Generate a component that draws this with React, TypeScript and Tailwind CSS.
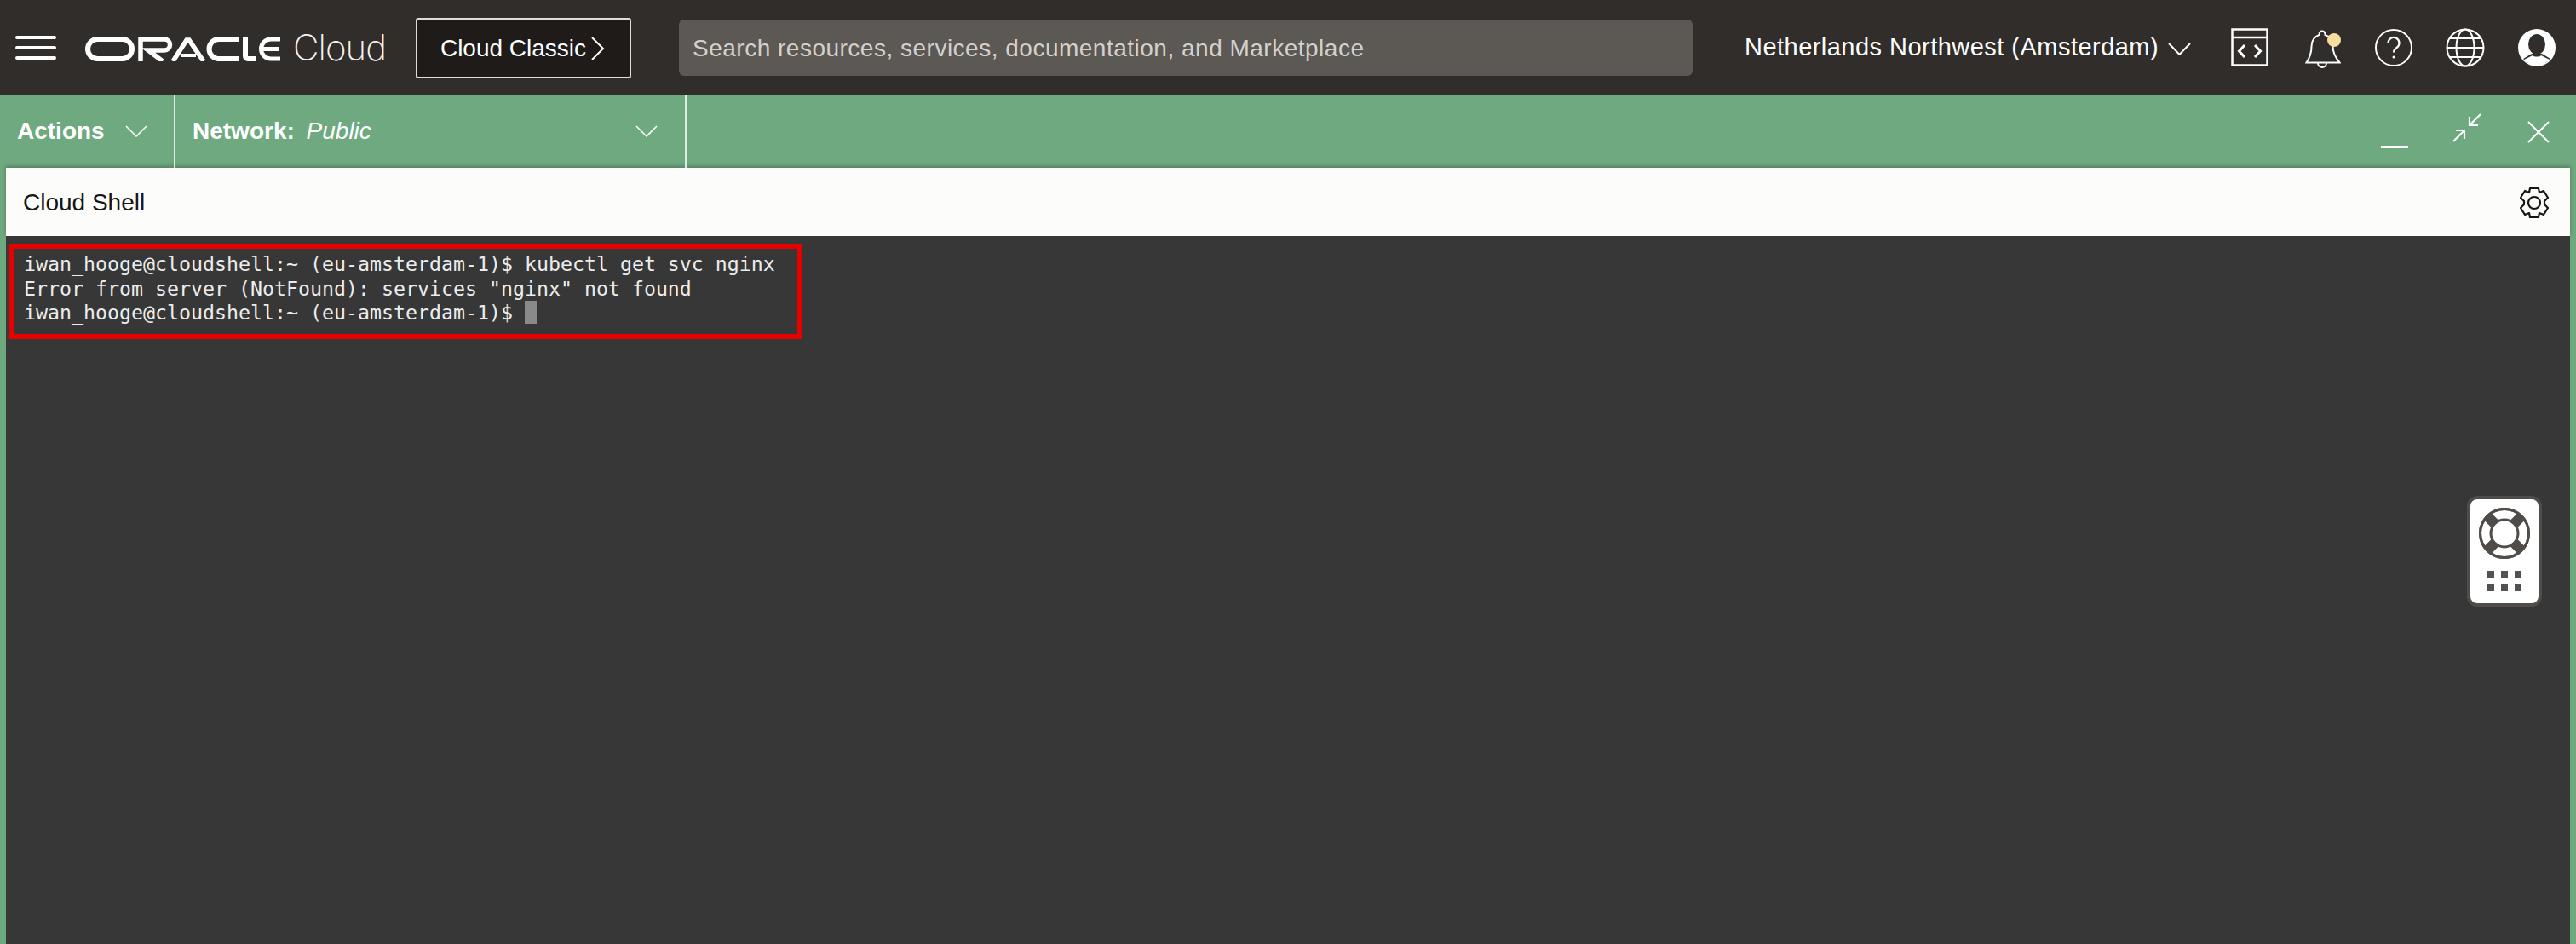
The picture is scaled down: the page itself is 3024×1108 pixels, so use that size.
const sans = "font-['Liberation_Sans',Arial,sans-serif]"

function OracleLogo() {
  return (
    <svg width="229" height="29" viewBox="0 0 229 29" fill="none" stroke="white" strokeWidth="6">
      <rect x="3" y="3" width="52" height="23" rx="11.500" />
      <path d="M65 29V3h28a6.500 6.500 0 0 1 0 13H74l17 13" strokeWidth="5.500" />
      <path d="M103 29 119 4h3l17 25" strokeWidth="5.500" />
      <path d="M113 22h17" strokeWidth="4" />
      <path d="M181 3h-24a11.500 11.500 0 0 0 0 23h24" />
      <path d="M188 0v23a3 3 0 0 0 3 3h10" />
      <path d="M229 3h-11a11.500 11.500 0 0 0 0 23h11M207 14.500h20" strokeWidth="5" />
    </svg>
  )
}

function Chevron({ w = 27, h = 15, stroke = 2 }: { w?: number; h?: number; stroke?: number }) {
  return (
    <svg width={w} height={h} viewBox={`0 0 ${w} ${h}`} fill="none" stroke="white" strokeWidth={stroke}>
      <path d={`M1 1l${(w - 2) / 2} ${h - 2}L${w - 1} 1`} />
    </svg>
  )
}

function ClassicChevron() {
  return (
    <svg width="16" height="28" viewBox="0 0 16 28" fill="none" stroke="white" strokeWidth="2">
      <path d="M1 1l13 13L1 27" />
    </svg>
  )
}

function CodeIcon() {
  return (
    <svg width="44" height="45" viewBox="0 0 44 45" fill="none" stroke="white" strokeWidth="2.500">
      <rect x="1.500" y="1.500" width="41" height="42" />
      <path d="M1.500 11h41" />
      <path d="M16 20l-6.500 7 6.500 7M28 20l6.500 7-6.500 7" strokeWidth="3" />
    </svg>
  )
}

function BellIcon() {
  return (
    <svg width="42" height="48" viewBox="0 0 42 48" fill="none">
      <path d="M1.500 40.500c4-6 6-11 6-19 0-7 4-12 9-13.500 0-6 7-6 7 0 5 1.500 9 6.500 9 13.500 0 8 3 13 8 19z" stroke="white" strokeWidth="2" />
      <path d="M15 41a5 5 0 0 0 10 0" stroke="white" strokeWidth="2" />
      <circle cx="34" cy="14" r="8" fill="#f8dca0" />
    </svg>
  )
}

function HelpIcon() {
  return (
    <svg width="44" height="44" viewBox="0 0 44 44" fill="none" stroke="white" strokeWidth="2">
      <circle cx="22" cy="22" r="21" />
      <path d="M15.500 16.500a6.500 6.500 0 1 1 10 5.500c-2.500 1.700-3.500 3-3.500 5.500" strokeWidth="2.200" />
      <circle cx="22" cy="33" r="1.500" fill="white" stroke="none" />
    </svg>
  )
}

function GlobeIcon() {
  return (
    <svg width="46" height="46" viewBox="0 0 46 46" fill="none" stroke="white" strokeWidth="2">
      <circle cx="23" cy="23" r="21.500" />
      <ellipse cx="23" cy="23" rx="10.500" ry="21.500" />
      <path d="M5 12h36M1.500 23h43M5 34h36" />
    </svg>
  )
}

function UserIcon() {
  return (
    <svg width="44" height="44" viewBox="0 0 44 44">
      <circle cx="22" cy="22" r="22" fill="white" />
      <ellipse cx="22" cy="18" rx="10" ry="12" fill="#312d2a" />
      <path d="M6 35l10-6h12l10 6-6 5H12z" fill="#312d2a" />
      <path d="M7 36l10-5c2 2 8 2 10 0l10 5c-4 4-9 7-15 7S11 40 7 36z" fill="white" />
    </svg>
  )
}

function CollapseIcon() {
  return (
    <svg width="34" height="34" viewBox="0 0 34 34" fill="none" stroke="white" strokeWidth="2.200">
      <path d="M33 1 20 14M20 4v10h10" />
      <path d="M1 33l13-13M4 20h10v10" />
    </svg>
  )
}

function CloseIcon() {
  return (
    <svg width="26" height="26" viewBox="0 0 26 26" fill="none" stroke="white" strokeWidth="2">
      <path d="M1 1l24 24M25 1 1 25" />
    </svg>
  )
}

function GearIcon() {
  return (
    <svg width="38" height="38" viewBox="0 0 38 38" fill="none" stroke="#161513" strokeWidth="2.200">
      <path d="M14 2h10l1 5 5-2 5 8-4 4v4l4 4-5 8-5-2-1 5H14l-1-5-5 2-5-8 4-4v-4L3 13l5-8 5 2z" strokeLinejoin="round" />
      <circle cx="19" cy="19" r="7" />
    </svg>
  )
}

function SupportIcon() {
  return (
    <svg width="60" height="60" viewBox="0 0 60 60">
      <circle cx="30" cy="30" r="28.500" fill="#fff" stroke="#4f4c49" strokeWidth="3" />
      <g stroke="#4f4c49" strokeWidth="12">
        <path d="M10 10l12 12M50 10 38 22M10 50l12-12M50 50 38 38" />
      </g>
      <circle cx="30" cy="30" r="28.500" fill="none" stroke="#4f4c49" strokeWidth="3" />
      <circle cx="30" cy="30" r="16" fill="#fff" stroke="#4f4c49" strokeWidth="3" />
    </svg>
  )
}

export default function App() {
  return (
    <div className={`flex h-[1108px] w-[3024px] flex-col overflow-hidden bg-[#6ea980] ${sans}`}>
      <header className="flex h-[112px] shrink-0 items-center bg-[#312d2a] text-white">
        <div className="ml-[18px] flex h-[28px] w-[48px] flex-col justify-between">
          <span className="h-1 rounded-sm bg-white" />
          <span className="h-1 rounded-sm bg-white" />
          <span className="h-1 rounded-sm bg-white" />
        </div>
        <div className="ml-[34px] mt-[2px]"><OracleLogo /></div>
        <span className="ml-[15px] w-[107px] shrink-0 font-['Inter'] text-[42px] font-extralight leading-none tracking-[-1px] text-[#f5f4f2]">Cloud</span>
        <button className="ml-[37px] flex h-[71px] w-[253px] items-center justify-center gap-[6px] rounded-[3px] border-2 border-[#e0dcd8] bg-[#1e1b18] pr-[2px] pt-[1px] text-[28px]">
          Cloud Classic
          <ClassicChevron />
        </button>
        <div className="ml-[56px] flex h-[66px] w-[1190px] items-center rounded-[6px] bg-[#5c5854] px-4 pt-[2px] text-[28px] tracking-[0.5px] text-[#d4d0cc]">
          Search resources, services, documentation, and Marketplace
        </div>
        <span className="ml-[61px] text-[29px] tracking-[0.47px]">Netherlands Northwest (Amsterdam)</span>
        <span className="ml-[11px] mt-[2px]"><Chevron /></span>
        <div className="ml-[47px] mt-[-1px]"><CodeIcon /></div>
        <div className="ml-[43px] mt-[2px]"><BellIcon /></div>
        <div className="ml-[40px]"><HelpIcon /></div>
        <div className="ml-[39px]"><GlobeIcon /></div>
        <div className="ml-[39px]"><UserIcon /></div>
      </header>

      <div className="relative z-10 flex h-[85px] shrink-0 items-stretch text-white">
        <div className="flex w-[206px] items-center justify-between border-r-2 border-[#dcebe1] pb-[2px] pl-5 pr-[31px] text-[28px] font-bold">
          Actions
          <Chevron w={26} h={14} stroke={1.6} />
        </div>
        <div className="flex w-[600px] items-center justify-between border-r-2 border-[#dcebe1] pb-[2px] pl-5 pr-[32px] text-[28px]">
          <span><b>Network:</b> <i className="ml-[6px] font-light">Public</i></span>
          <Chevron w={26} h={14} stroke={1.6} />
        </div>
        <div className="ml-auto flex items-center pr-[31px]">
          <span className="mt-[35px] h-[3px] w-[32px] bg-white" />
          <span className="mb-[9px] ml-[52px]"><CollapseIcon /></span>
          <span className="ml-[54px]"><CloseIcon /></span>
        </div>
      </div>

      <div className="mx-[7px] flex h-[80px] shrink-0 items-center justify-between bg-[#fcfcfb] pl-5 pr-[23px] pt-[1px] text-[28px] text-[#161513] shadow-[0_-2px_5px_rgba(0,0,0,0.25)]">
        Cloud Shell
        <GearIcon />
      </div>

      <main className="relative mx-[7px] flex-1 bg-[#373737] pl-[3px] pt-[9px]">
        <div className="h-[112px] w-[932px] border-[6px] border-[#e60000] pl-[12px] pt-[4px] font-['DejaVu_Sans_Mono',monospace] text-[23.250px] leading-[28.500px] text-[#ececec]">
          <div>iwan_hooge@cloudshell:~ (eu-amsterdam-1)$ kubectl get svc nginx</div>
          <div>Error from server (NotFound): services "nginx" not found</div>
          <div className="flex">
            iwan_hooge@cloudshell:~ (eu-amsterdam-1)$
            <span className="ml-[14px] h-[27px] w-[14px] bg-[#8a8a8a]" />
          </div>
        </div>
        <div className="absolute right-[33px] top-[305px] flex h-[130px] w-[88px] flex-col items-center rounded-[12px] border-4 border-[#4f4c49] bg-white pt-[10px]">
          <SupportIcon />
          <div className="mt-[14px] grid grid-cols-3 gap-[8px]">
            {[0, 1, 2, 3, 4, 5].map((i) => (
              <span key={i} className="h-2 w-2 bg-[#55514e]" />
            ))}
          </div>
        </div>
      </main>
    </div>
  )
}
